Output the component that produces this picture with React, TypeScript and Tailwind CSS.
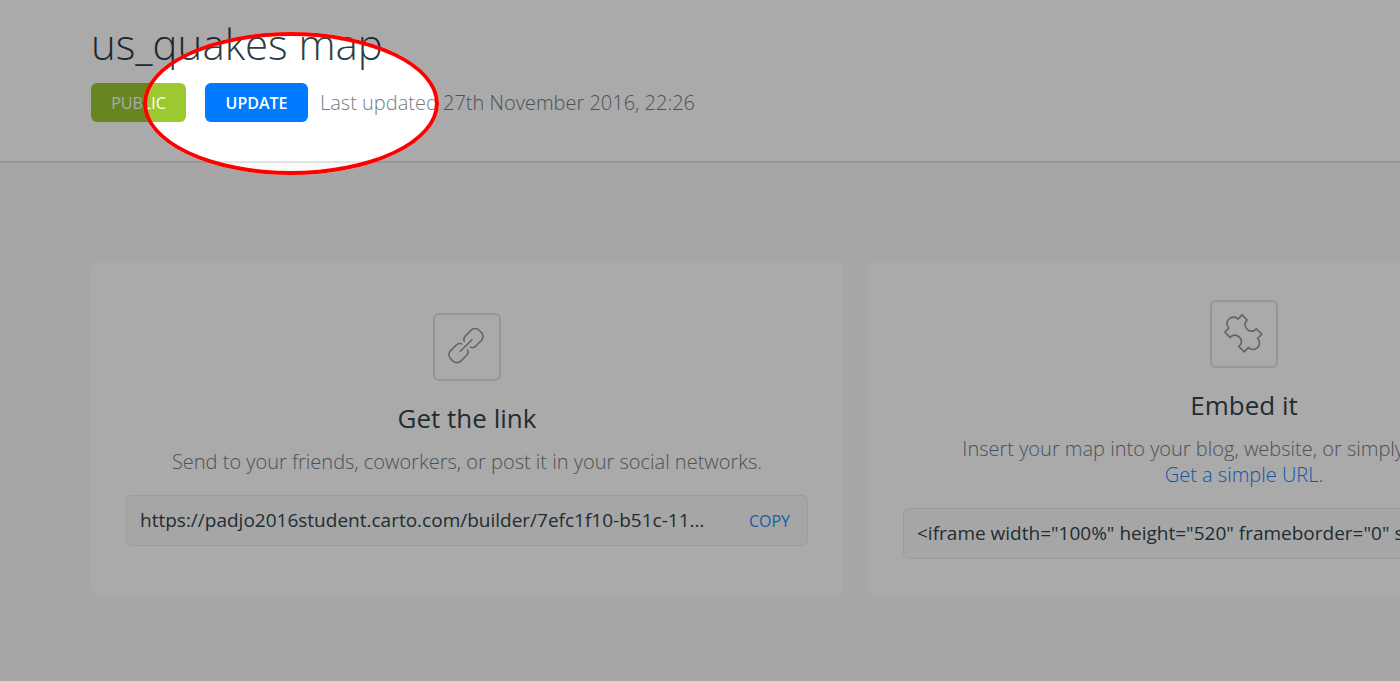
import type { ReactNode } from "react";

function LinkIcon() {
  return (
    <svg width="40" height="40" viewBox="0 0 40 40" fill="none" stroke="#8d9599" strokeWidth="1.6" strokeLinecap="round" aria-hidden="true">
      <g transform="translate(19 18.6) rotate(-45) scale(0.96)">
        <path d="M2-4.5C3-7 5-7.6 7-7.6H15a6 6 0 0 1 6 6v3.2a6 6 0 0 1-6 6H7C5 7.6 3 7 2 4.5" />
        <path d="M-2-4.5C-3-7-5-7.6-7-7.6H-15a6 6 0 0 0-6 6v3.2a6 6 0 0 0 6 6H-7C-5 7.6-3 7-2 4.5" />
        <path d="M-8.7 0H8.7" />
      </g>
    </svg>
  );
}

function PuzzleIcon() {
  return (
    <svg width="40" height="40" viewBox="0 0 40 40" fill="none" stroke="#8d9599" strokeWidth="1.6" aria-hidden="true">
      <path d="M18 .9L23.1 6L21.5 8.3A6.6 6.6 0 0 0 30 16.8L32.3 14.8L37.8 20.3L33.7 24.5A6.4 6.4 0 1 1 24.3 33.5L20.3 37.8L14.8 32.5L16.8 30.3A6.6 6.6 0 0 0 8.2 21.7L6 23.5L.9 18L4.9 14.1A6.4 6.4 0 1 1 14 5Z" />
    </svg>
  );
}

type ShareCardProps = {
  id: string;
  icon: ReactNode;
  title: string;
  children: ReactNode;
  value: string;
};

function ShareCard({ id, icon, title, children, value }: ShareCardProps) {
  return (
    <section className="flex w-[752px] shrink-0 flex-col items-center justify-center rounded-md bg-white px-[35px] pt-[38px] pb-9">
      <div className="flex size-[68px] items-center justify-center rounded-md border-2 border-[#e2e2e2]">{icon}</div>
      <h2 className="mt-[17px] text-[26px] leading-10 text-[#33444b]">
        <label htmlFor={id}>{title}</label>
      </h2>
      <p className="mt-[11px] text-center text-[20px] leading-[26px] font-light text-[#737c81]">{children}</p>
      <div className="mt-5 flex h-[51px] w-full items-center rounded-md border border-[#ebebeb] bg-[#f9f9f9] pr-[17px] pl-[13px]">
        <input
          id={id}
          readOnly
          value={value}
          className="min-w-0 flex-1 truncate bg-transparent text-[19px] text-[#33444b] outline-none"
        />
        <button type="button" className="ml-9 text-base text-[#1e8cff]">
          COPY
        </button>
      </div>
    </section>
  );
}

export default function App() {
  return (
    <div className="relative min-h-screen overflow-hidden bg-[#f9f9f9] font-['Open_Sans',sans-serif]">
      <header className="border-b-2 border-[#e3e3e3] bg-white px-[91px] pt-4 pb-[39px]">
        <h1 className="text-[42px] leading-[56px] font-light text-[#2e3c43]">us_quakes map</h1>
        <div className="mt-[11px] flex items-center">
          <button type="button" className="h-[39px] w-[95px] rounded-md bg-[#9bc92f] text-base text-white">
            PUBLIC
          </button>
          <button type="button" className="ml-[19px] h-[39px] w-[103px] rounded-md bg-[#007aff] text-base font-semibold text-white">
            UPDATE
          </button>
          <p className="ml-3 text-[20px] leading-[26px] font-light text-[#737c81]">Last updated 27th November 2016, 22:26</p>
        </div>
      </header>

      <main className="flex gap-[25px] px-[91px] pt-[99px] pb-[86px]">
        <ShareCard
          id="share-link"
          icon={<LinkIcon />}
          title="Get the link"
          value="https://padjo2016student.carto.com/builder/7efc1f10-b51c-11e6-a5b1-0ecd1babdde5/embed"
        >
          Send to your friends, coworkers, or post it in your social networks.
        </ShareCard>
        <ShareCard
          id="embed-code"
          icon={<PuzzleIcon />}
          title="Embed it"
          value={'<iframe width="100%" height="520" frameborder="0" src="https://padjo2016student.carto.com/builder/7efc1f10-b51c-11e6-a5b1-0ecd1babdde5/embed" allowfullscreen></iframe>'}
        >
          Insert your map into your blog, website, or simply share a map.
          <br />
          <a href="#simple-url" className="text-[#0f84ff]">
            Get a simple URL.
          </a>
        </ShareCard>
      </main>

      <div className="pointer-events-none absolute top-8 left-[143px] h-[143px] w-[296px] rounded-[50%] border-4 border-[#ff0000] shadow-[0_0_0_9999px_rgba(0,0,0,0.335)]" />
    </div>
  );
}
